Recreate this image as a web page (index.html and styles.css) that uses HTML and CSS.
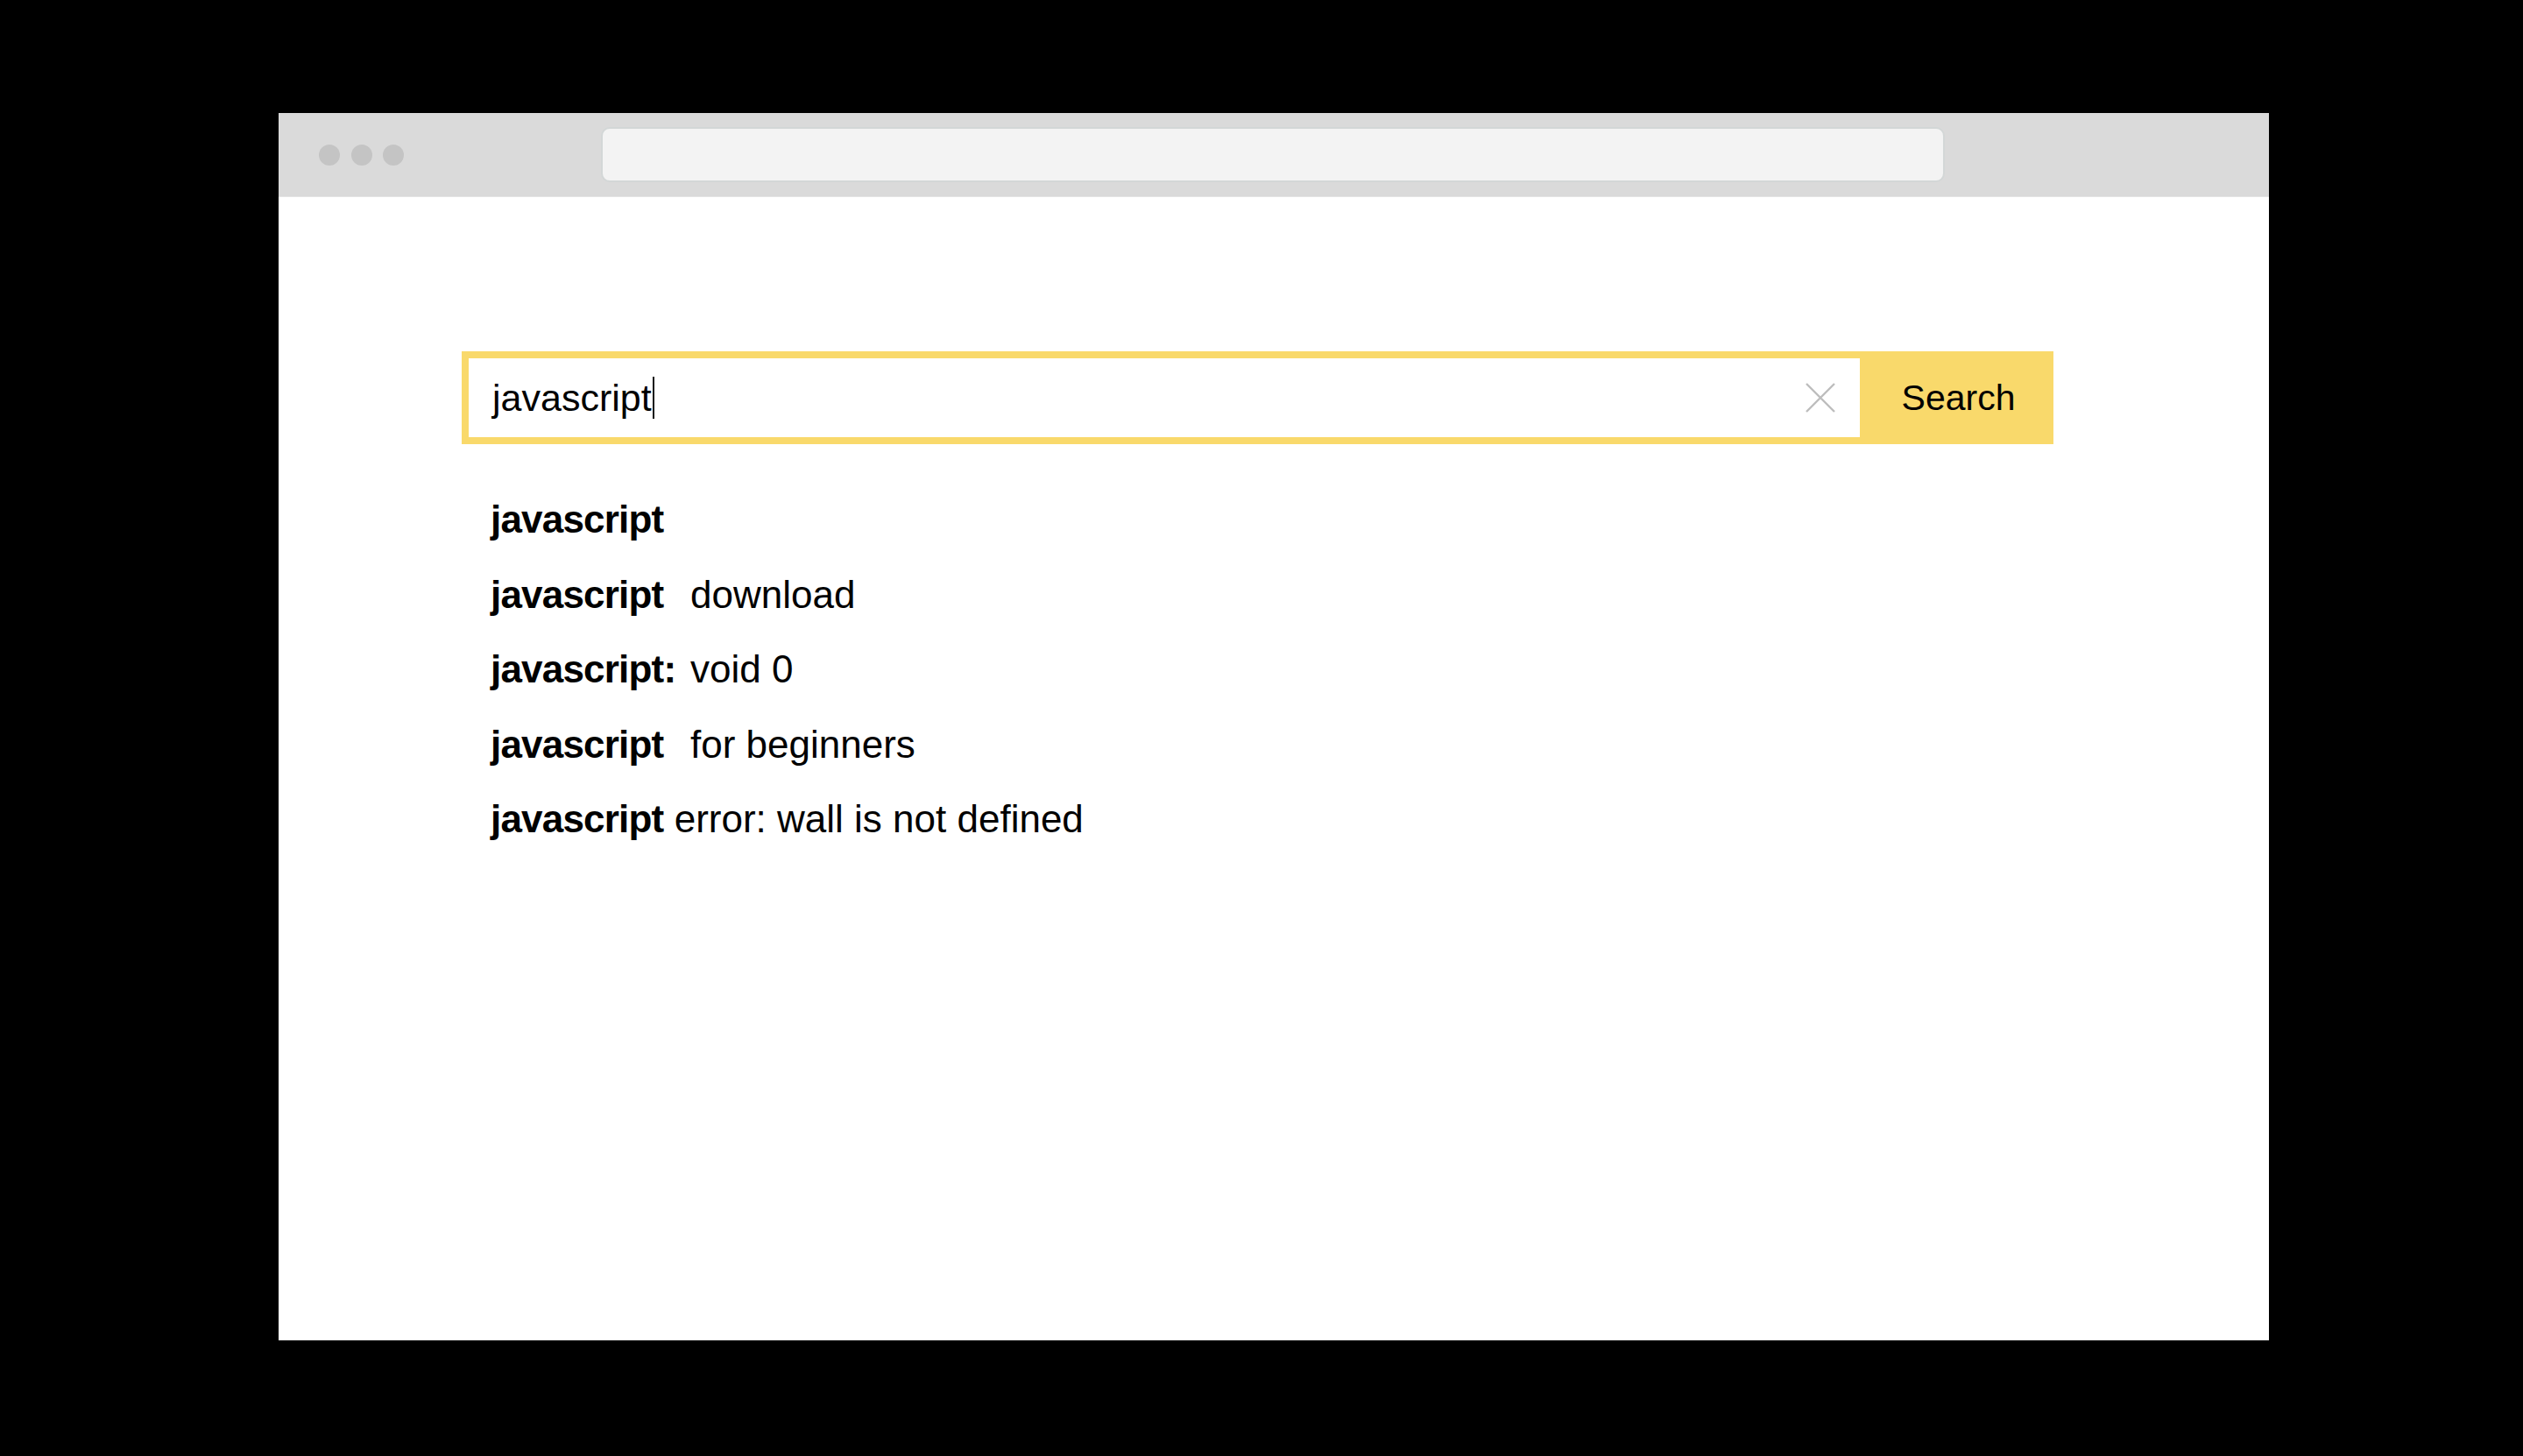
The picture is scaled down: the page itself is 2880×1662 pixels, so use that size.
FILE: index.html
```html
<!DOCTYPE html>
<html lang="en">
<head>
<meta charset="utf-8">
<title>Search suggestions</title>
<link rel="stylesheet" href="styles.css">
</head>
<body>
<div class="window">
  <div class="toolbar">
    <div class="dots">
      <span class="dot"></span><span class="dot"></span><span class="dot"></span>
    </div>
    <div class="address"></div>
  </div>
  <div class="page">
    <div class="searchbox">
      <div class="field">
        <div class="query">javascript<span class="caret"></span></div>
        <svg class="clear" width="36" height="36" viewBox="0 0 36 36" aria-hidden="true">
          <path d="M2 2 L34 34 M34 2 L2 34" stroke="#bdbdbd" stroke-width="2.4" fill="none"/>
        </svg>
      </div>
      <div class="button">Search</div>
    </div>
    <ul class="suggest">
      <li><b class="q">javascript</b></li>
      <li><b class="q col">javascript</b><span>download</span></li>
      <li><b class="q col">javascript:</b><span>void 0</span></li>
      <li><b class="q col">javascript</b><span>for beginners</span></li>
      <li><b class="q">javascript</b> <span>error: wall is not defined</span></li>
    </ul>
  </div>
</div>
</body>
</html>
```

FILE: styles.css
```css
html, body {
  margin: 0;
  padding: 0;
  background: #000;
}

body {
  font-family: "Liberation Sans", Arial, sans-serif;
  color: #000;
}

.window {
  margin-left: 318px;
  margin-top: 129px;
  width: 2272px;
  height: 1401px;
  background: #fff;
  display: flex;
  flex-direction: column;
}

.toolbar {
  height: 95px;
  background: #dadada;
  border-bottom: 1px solid #e4e4e4;
  display: flex;
  align-items: center;
  position: relative;
}

.dots {
  display: flex;
  gap: 12.5px;
  padding-left: 46px;
}

.dot {
  width: 24px;
  height: 24px;
  border-radius: 50%;
  background: #c4c4c4;
}

.address {
  margin-left: 225px;
  width: 1530px;
  height: 59px;
  background: #f3f3f3;
  border: 2px solid #d3d7d7;
  border-radius: 10px;
}

.page {
  padding: 176px 0 0 209px;
}

.searchbox {
  width: 1801px;
  height: 90px;
  border: 8px solid #f9d96b;
  display: flex;
}

.field {
  flex: 1;
  background: #fff;
  display: flex;
  align-items: center;
  padding: 0 27px;
}

.query {
  flex: 1;
  font-size: 43px;
  display: flex;
  align-items: center;
}

.caret {
  display: inline-block;
  width: 2px;
  height: 48px;
  background: #111;
  margin-left: 1px;
}

.clear {
  display: block;
}

.button {
  width: 213px;
  background: #f9d96b;
  display: flex;
  align-items: center;
  justify-content: center;
  font-size: 41px;
  padding-left: 12px;
  box-sizing: border-box;
}

.suggest {
  list-style: none;
  margin: 43px 0 0 0;
  padding: 0 0 0 33px;
  font-size: 44px;
  line-height: 85.6px;
}

.suggest li {
  white-space: nowrap;
}

.q {
  font-weight: bold;
  letter-spacing: -0.8px;
}

.q.col {
  display: inline-block;
  min-width: 228px;
}
```
